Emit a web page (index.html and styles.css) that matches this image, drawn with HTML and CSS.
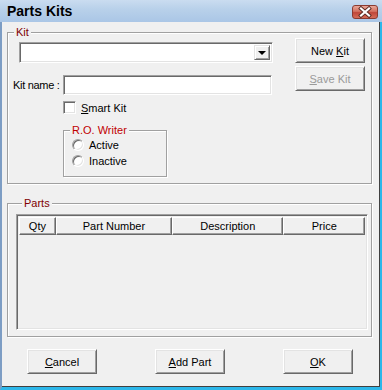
FILE: index.html
```html
<!DOCTYPE html>
<html lang="en">
<head>
  <meta charset="UTF-8">
  <title>Parts Kits</title>
  <link rel="stylesheet" href="styles.css">
</head>
<body>
  <div class="window">
    <div class="titlebar">
      <span class="title">Parts Kits</span>
      <div class="close-btn">
        <svg width="26" height="14" viewBox="0 0 26 14">
          <path d="M9 3.5 L17 10.5 M17 3.5 L9 10.5" stroke="#5a2a22" stroke-width="4" stroke-linecap="square"/>
          <path d="M9 3.5 L17 10.5 M17 3.5 L9 10.5" stroke="#ffffff" stroke-width="2.2" stroke-linecap="square"/>
        </svg>
      </div>
    </div>

    <div class="client">
      <!-- Kit -->
      <div class="group kit-group">
        <div class="group-title">Kit</div>
        <div class="kit-body">
          <div class="kit-fields">
            <div class="combo">
              <div class="combo-btn"><span class="arrow"></span></div>
            </div>
            <div class="name-row">
              <label class="name-label">Kit name :</label>
              <div class="textbox"></div>
            </div>
            <div class="check-row">
              <span class="checkbox"></span>
              <span><u>S</u>mart Kit</span>
            </div>
            <div class="group ro-group">
              <div class="group-title ro-title">R.O. Writer</div>
              <div class="radio-row"><span class="radio"></span><span>Active</span></div>
              <div class="radio-row"><span class="radio"></span><span>Inactive</span></div>
            </div>
          </div>
          <div class="kit-buttons">
            <div class="button"><span>New <u>K</u>it</span></div>
            <div class="button disabled"><span><u>S</u>ave Kit</span></div>
          </div>
        </div>
      </div>

      <!-- Parts -->
      <div class="group parts-group">
        <div class="group-title">Parts</div>
        <div class="listview">
          <div class="lv-header">
            <div class="col col-qty">Qty</div>
            <div class="col col-part">Part Number</div>
            <div class="col col-desc">Description</div>
            <div class="col col-price">Price</div>
          </div>
        </div>
      </div>

      <div class="actions">
        <div class="button"><span><u>C</u>ancel</span></div>
        <div class="button"><span><u>A</u>dd Part</span></div>
        <div class="button"><span><u>O</u>K</span></div>
      </div>
    </div>
  </div>
</body>
</html>
```

FILE: styles.css
```css
* {
  margin: 0;
  padding: 0;
  box-sizing: border-box;
}

body {
  font-family: "Liberation Sans", Arial, sans-serif;
  font-size: 11px;
  color: #000;
  background: #f0f0f0;
}

.window {
  width: 382px;
  height: 390px;
  display: flex;
  flex-direction: column;
  border-left: 2px solid #7d9dc4;
  border-right: 2px solid #2db7ea;
  border-bottom: 3px solid #2db7ea;
  background: #f0f0f0;
}

.titlebar {
  height: 22px;
  margin-left: -2px;
  margin-right: -2px;
  padding: 0 4px 0 7px;
  display: flex;
  justify-content: space-between;
  align-items: flex-start;
  background: linear-gradient(#cadcf0, #b9d1ea 40%, #aac6e6);
}

.title {
  font-weight: bold;
  font-size: 14px;
  line-height: 22px;
}

.close-btn {
  width: 26px;
  height: 14px;
  margin-top: 5px;
  border: 1px solid #8b3b31;
  border-radius: 3px;
  background: linear-gradient(#e9a799, #d3705f 45%, #c0473a 55%, #d56c58);
  display: flex;
}

.close-btn svg {
  margin: -1px;
}

.client {
  flex: 1;
  padding: 10px 7px 0 5px;
  border-right: 1px solid #404040;
  border-bottom: 1px solid #404040;
}

/* group box */
.group {
  border: 1px solid #a0a0a0;
  box-shadow: 1px 1px 0 #fff, inset 1px 1px 0 #fff;
}

.group-title {
  display: table;
  margin: -7px 0 0 6px;
  padding: 0 2px;
  line-height: 13px;
  background: #f0f0f0;
  color: #800000;
}

.kit-body {
  display: flex;
  padding: 0 6px 6px 5px;
}

.kit-fields {
  flex: 1;
}

/* sunken fields */
.combo,
.textbox,
.checkbox,
.listview {
  border: 1px solid;
  border-color: #a0a0a0 #fff #fff #a0a0a0;
  box-shadow: inset 1px 1px 0 #696969, inset -1px -1px 0 #e3e3e3;
  background: #fff;
}

.combo {
  width: 254px;
  height: 21px;
  margin: 3px 0 0 6px;
  padding: 2px;
  display: flex;
  justify-content: flex-end;
}

.combo-btn {
  width: 16px;
  height: 15px;
  border: 1px solid;
  border-color: #e3e3e3 #696969 #696969 #e3e3e3;
  box-shadow: inset 1px 1px 0 #fff, inset -1px -1px 0 #a0a0a0;
  background: #f0f0f0;
  display: flex;
  align-items: center;
  justify-content: center;
}

.arrow {
  width: 0;
  height: 0;
  border-left: 4px solid transparent;
  border-right: 4px solid transparent;
  border-top: 4px solid #000;
  margin-top: 1px;
}

.name-row {
  display: flex;
  align-items: center;
  margin-top: 12px;
}

.name-label {
  width: 50px;
  letter-spacing: -0.3px;
}

.textbox {
  width: 209px;
  height: 20px;
}

.check-row {
  display: flex;
  align-items: center;
  gap: 5px;
  margin: 6px 0 0 50px;
  height: 13px;
}

.checkbox {
  width: 13px;
  height: 13px;
}

.ro-group {
  width: 104px;
  margin: 16px 0 0 50px;
  padding: 1px 0 7px 8px;
}

.ro-title {
  margin: -8px 0 0 -2px;
  color: #c00000;
}

.radio-row {
  display: flex;
  align-items: center;
  gap: 5px;
  height: 16px;
}

.radio {
  width: 12px;
  height: 12px;
  border-radius: 50%;
  border: 1px solid;
  border-color: #a0a0a0 #fff #fff #a0a0a0;
  box-shadow: inset 1px 1px 0 #696969, inset -1px -1px 0 #e3e3e3;
  background: #fff;
}

/* buttons */
.kit-buttons {
  display: flex;
  flex-direction: column;
  gap: 3px;
  margin-top: -1px;
}

.button {
  width: 70px;
  height: 25px;
  display: flex;
  align-items: center;
  justify-content: center;
  border: 1px solid;
  border-color: #fff #696969 #696969 #fff;
  box-shadow: inset 1px 1px 0 #e3e3e3, inset -1px -1px 0 #a0a0a0;
  background: #f0f0f0;
}

.button.disabled {
  color: #9a9a9a;
}

/* parts */
.parts-group {
  margin-top: 19px;
  padding: 0 3px 6px 8px;
}

.listview {
  width: 352px;
  height: 116px;
  margin-top: 4px;
  padding: 2px;
  background: #f0f0f0;
}

.lv-header {
  display: flex;
  height: 18px;
}

.col {
  display: flex;
  align-items: center;
  justify-content: center;
  border: 1px solid;
  border-color: #fff #696969 #696969 #fff;
  box-shadow: inset -1px -1px 0 #a0a0a0;
  background: #f0f0f0;
}

.col-qty { width: 37px; }
.col-part { width: 117px; }
.col-desc { width: 112px; }
.col-price { width: 82px; }

.actions {
  display: flex;
  gap: 58px;
  margin-top: 12px;
  padding-left: 20px;
}
```
